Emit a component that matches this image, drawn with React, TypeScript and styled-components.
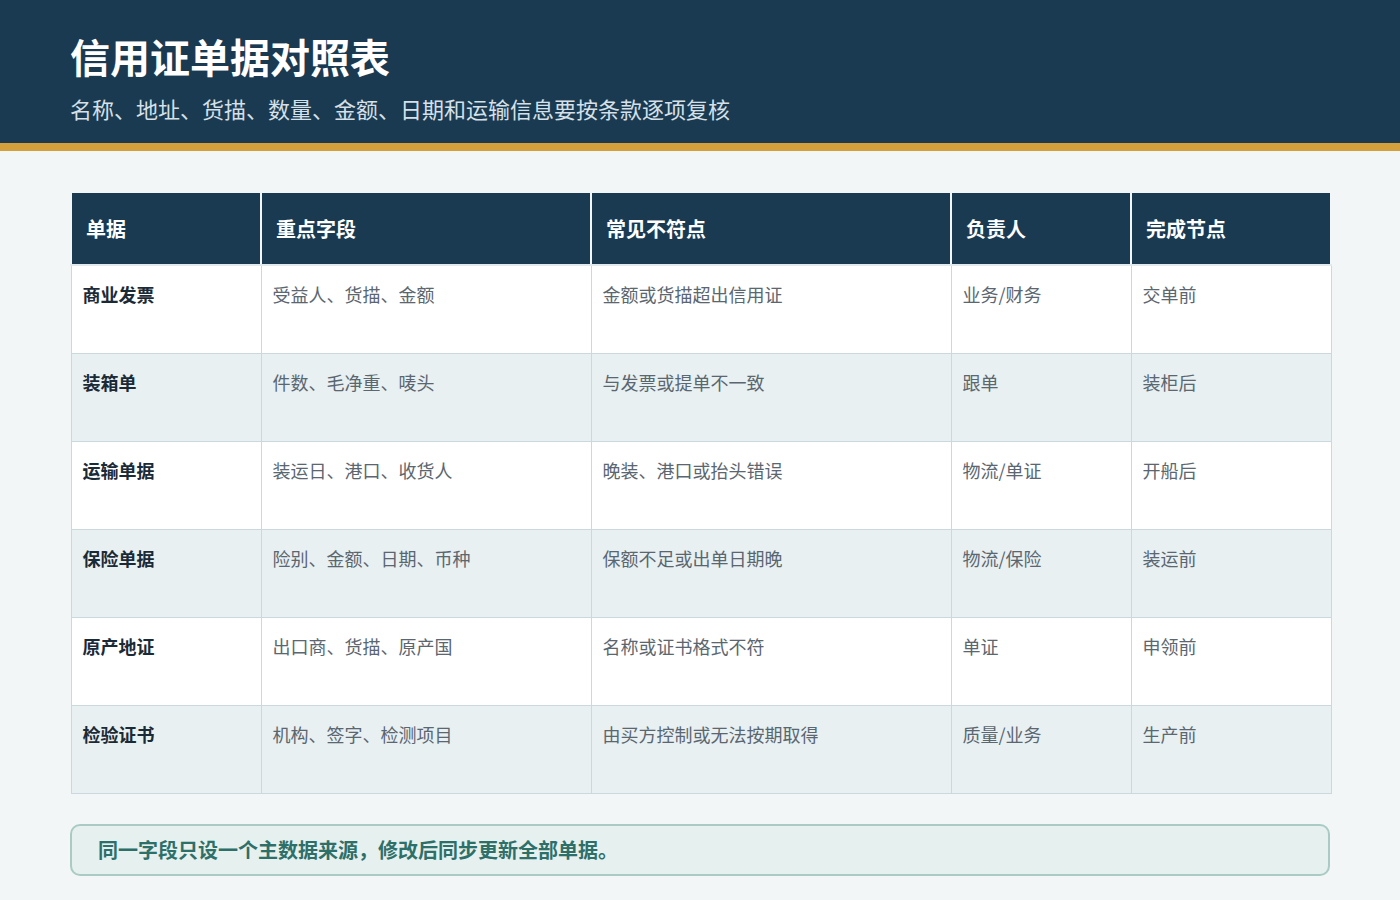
import styled, { createGlobalStyle } from 'styled-components';

const Global = createGlobalStyle`
  body {
    margin: 0;
    background: #f2f6f7;
    font-family: 'Noto Sans CJK SC', 'Noto Sans', sans-serif;
  }
`;

const rows = [
  ['商业发票', '受益人、货描、金额', '金额或货描超出信用证', '业务/财务', '交单前'],
  ['装箱单', '件数、毛净重、唛头', '与发票或提单不一致', '跟单', '装柜后'],
  ['运输单据', '装运日、港口、收货人', '晚装、港口或抬头错误', '物流/单证', '开船后'],
  ['保险单据', '险别、金额、日期、币种', '保额不足或出单日期晚', '物流/保险', '装运前'],
  ['原产地证', '出口商、货描、原产国', '名称或证书格式不符', '单证', '申领前'],
  ['检验证书', '机构、签字、检测项目', '由买方控制或无法按期取得', '质量/业务', '生产前'],
];
const heads = ['单据', '重点字段', '常见不符点', '负责人', '完成节点'];
const widths = [190, 330, 360, 180, 200];

const Header = styled.header`
  background: #1a3a52;
  padding: 28px 70px 0;
  height: 143px;
  box-sizing: border-box;
  border-bottom: 8px solid #d4a03c;
  height: 151px;
`;
const Title = styled.h1`
  margin: 0;
  color: #fff;
  font-size: 40px;
  font-weight: 700;
  line-height: 56px;
`;
const Sub = styled.p`
  margin: 8px 0 0;
  color: #d6e0e8;
  font-size: 22px;
  line-height: 32px;
`;
const Main = styled.main`
  padding: 40px 70px 0;
`;
const Table = styled.table`
  width: 1260px;
  border-collapse: collapse;
  table-layout: fixed;
`;
const Th = styled.th`
  background: #1a3a52;
  color: #fff;
  font-size: 20px;
  font-weight: 700;
  text-align: left;
  height: 71px;
  padding: 0 14px;
  border: 2px solid #f2f6f7;
  border-bottom-color: #e2eaee;
`;
const Tr = styled.tr<{ $alt: boolean }>`
  background: ${p => (p.$alt ? '#e8f0f2' : '#ffffff')};
`;
const Td = styled.td<{ $first?: boolean }>`
  height: 88px;
  box-sizing: border-box;
  vertical-align: top;
  padding: 16px 11px;
  border: 1px solid #cbd8df;
  font-size: 18px;
  line-height: 24px;
  color: ${p => (p.$first ? '#1a2a36' : '#5a6670')};
  font-weight: ${p => (p.$first ? 700 : 400)};
`;
const Note = styled.div`
  margin-top: 30px;
  border: 2px solid #a9cbc4;
  border-radius: 10px;
  background: #e6f0ee;
  height: 52px;
  box-sizing: border-box;
  display: flex;
  align-items: center;
  padding: 0 26px;
  color: #2d6f69;
  font-size: 20px;
  font-weight: 700;
`;

export default function App() {
  return (
    <>
      <Global />
      <Header>
        <Title>信用证单据对照表</Title>
        <Sub>名称、地址、货描、数量、金额、日期和运输信息要按条款逐项复核</Sub>
      </Header>
      <Main>
        <Table>
          <colgroup>
            {widths.map((w, i) => (
              <col key={i} style={{ width: w }} />
            ))}
          </colgroup>
          <thead>
            <tr>
              {heads.map(h => (
                <Th key={h}>{h}</Th>
              ))}
            </tr>
          </thead>
          <tbody>
            {rows.map((r, i) => (
              <Tr key={i} $alt={i % 2 === 1}>
                {r.map((c, j) => (
                  <Td key={j} $first={j === 0}>
                    {c}
                  </Td>
                ))}
              </Tr>
            ))}
          </tbody>
        </Table>
        <Note>同一字段只设一个主数据来源，修改后同步更新全部单据。</Note>
      </Main>
    </>
  );
}
